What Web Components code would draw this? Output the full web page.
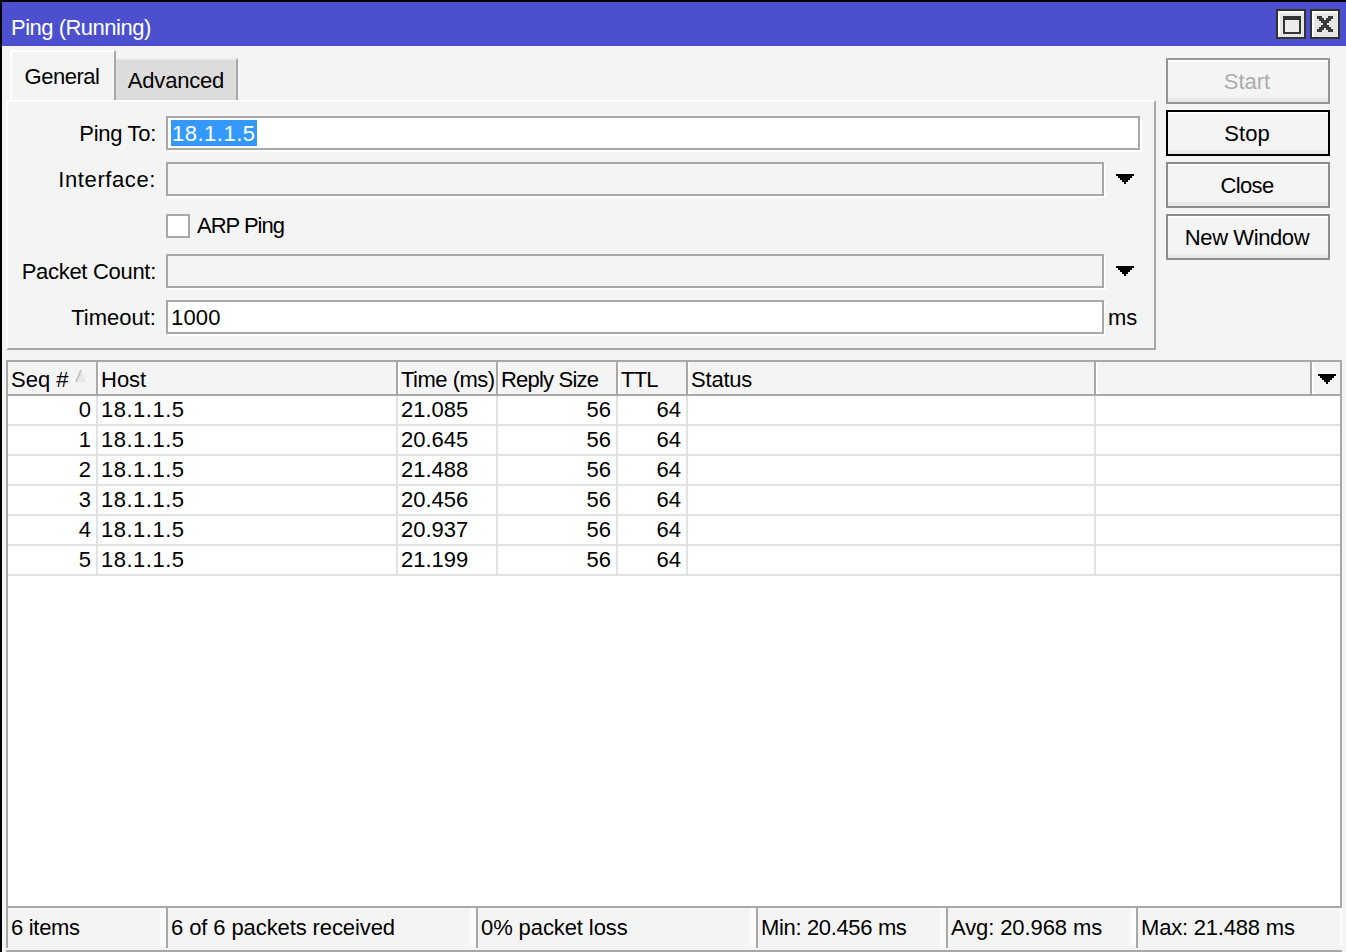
<!DOCTYPE html>
<html><head><meta charset="utf-8"><style>
html,body{margin:0;padding:0;background:#f4f4f4;overflow:hidden}
body{font:22px/30px "Liberation Sans",Arial,sans-serif;color:#000}
</style></head><body>
<win-frame>
  <win-title slot="title">Ping (Running)</win-title>
  <div slot="tabs"><win-tabs></win-tabs></div>
  <ping-form slot="form"></ping-form>
  <win-actions slot="actions">
    <win-btn disabled>Start</win-btn>
    <win-btn focus>Stop</win-btn>
    <win-btn style="letter-spacing:-.6px">Close</win-btn>
    <win-btn style="letter-spacing:-.4px">New Window</win-btn>
  </win-actions>
  <ping-table slot="table"></ping-table>
  <win-status slot="status"></win-status>
</win-frame>
<script>
function def(name,css,html,init){
  customElements.define(name,class extends HTMLElement{
    constructor(){super();const r=this.attachShadow({mode:'open'});r.innerHTML='<style>'+css+'</style>'+html;if(init)init.call(this,r);}
  });
}
const TRI='<svg width="18" height="10" viewBox="0 0 18 10" shape-rendering="crispEdges"><path d="M0 0H18V2H16V4H14V6H12V8H10V10H8V8H6V6H4V4H2V2H0Z" fill="#000"/></svg>';

def('win-frame',`
:host{display:flex;flex-direction:column;box-sizing:border-box;height:952px;border-left:2px solid #000;border-top:2px solid #000;background:#f4f4f4}
.main{display:flex;height:314px;flex:none}
.left{margin-left:4px;width:1150px;flex:none;display:flex;flex-direction:column}
.right{margin-left:10px;padding-top:12px}
.tbl{margin:0 4px;flex:1;display:flex;min-height:0}
.st{margin:0 4px 0 0;flex:none}
`,`<slot name="title"></slot>
<div class="main"><div class="left"><slot name="tabs"></slot><slot name="form"></slot></div><div class="right"><slot name="actions"></slot></div></div>
<div class="tbl"><slot name="table"></slot></div>
<div class="st"><slot name="status"></slot></div>`);

def('win-title',`
:host{display:flex;align-items:center;height:44px;flex:none;background:#4c50cf;color:#fff;padding:0 6px 0 9px;box-sizing:border-box;position:relative}
.t{flex:1;padding-top:8px;align-self:center;letter-spacing:-.5px}
.b{display:block;width:30px;height:30px;box-sizing:border-box;border:2px solid #333;background:#e6e6e6;box-shadow:inset 2px 2px 0 #fff;margin-left:4px}
svg{display:block;margin:2px}
`,`<span class="t"><slot></slot></span>
<span class="b"><svg width="22" height="22" viewBox="0 0 22 22" shape-rendering="crispEdges"><rect x="3" y="3" width="18" height="18" fill="#333"/><rect x="5" y="7" width="14" height="12" fill="#ececec"/></svg></span>
<span class="b"><svg width="22" height="22" viewBox="0 0 22 22" shape-rendering="crispEdges"><path d="M3 3H8V5H10V7H12V5H14V3H19V6H17V8H15V10H13V12H15V14H17V16H19V19H14V17H12V15H10V17H8V19H3V16H5V14H7V12H9V10H7V8H5V6H3Z" fill="#3a3a3a"/></svg></span>`);

def('win-tabs',`
:host{display:flex;align-items:flex-end;height:54px;padding-left:4px;box-sizing:border-box}
.t{box-sizing:border-box;text-align:center}
.a{width:106px;height:50px;background:#f4f4f4;border-top:2px solid #fff;border-left:2px solid #fff;border-right:2px solid #a8a8a8;line-height:50px;padding-right:2px;letter-spacing:-.5px}
.b{width:122px;height:42px;background:#dcdcdc;border-right:2px solid #a8a8a8;line-height:42px;border-top:2px solid #ececec;letter-spacing:-.2px}
`,`<div class="t a">General</div><div class="t b">Advanced</div>`);

def('form-row',`
:host{display:flex;align-items:center;height:34px;flex:none}
.l{width:148px;text-align:right;flex:none;margin-right:10px;padding-top:2px;box-sizing:border-box}
`,`<div class="l"><slot name="label"></slot></div><slot></slot>`);

def('win-input',`
:host{display:block;box-sizing:border-box;height:34px;flex:1;border:2px solid #a8a8a8;background:#fff;box-shadow:2px 2px 0 #fff;padding:0 3px;line-height:32px;white-space:nowrap;overflow:hidden}
:host([empty]){background:#f4f4f4}
`,`<slot></slot>`);

def('ping-form',`
:host{display:flex;flex-direction:column;gap:12px;box-sizing:border-box;height:250px;padding:14px 0 14px 0;border-top:2px solid #fff;border-left:2px solid #fff;border-right:2px solid #a8a8a8;border-bottom:2px solid #a8a8a8}
.sel{background:#3399ff;color:#fff;display:block;width:86px;box-sizing:border-box;height:26px;line-height:28px;margin:2px 0 0;padding:0 0 0 1px;letter-spacing:.5px}
.end1{width:14px;flex:none}
.arrow{flex:none;width:50px;display:flex;justify-content:center}
.arrow svg{display:block;margin:0 0 0 -8px}
.ck{display:block;width:24px;height:24px;box-sizing:border-box;border:2px solid #a8a8a8;background:#fff;flex:none;margin:2px 7px 0 0}
.lb{padding-top:2px;letter-spacing:-1px}
.ms{flex:none;width:50px;padding-left:4px;box-sizing:border-box;padding-top:2px}
.sp{letter-spacing:.6px}
.nr{letter-spacing:-.3px}
.num{letter-spacing:.2px}
`,`
<form-row><span slot="label" class="nr">Ping To:</span><win-input><span class="sel">18.1.1.5</span></win-input><span class="end1"></span></form-row>
<form-row><span slot="label" class="sp">Interface:</span><win-input empty></win-input><span class="arrow">${TRI}</span></form-row>
<form-row><span slot="label"></span><span class="ck"></span><span class="lb">ARP Ping</span></form-row>
<form-row><span slot="label" class="nr">Packet Count:</span><win-input empty></win-input><span class="arrow">${TRI}</span></form-row>
<form-row><span slot="label">Timeout:</span><win-input><span class="num">1000</span></win-input><span class="ms">ms</span></form-row>`);

def('win-actions',`:host{display:flex;flex-direction:column;gap:6px;width:164px}`,`<slot></slot>`);

def('win-btn',`
:host{display:block;box-sizing:border-box;height:46px;border:2px solid #8c8c8c;background:#f4f4f4;box-shadow:inset 0 2px 0 #fff,inset 0 -4px 0 #e9e9e9;text-align:center;line-height:43px;padding-right:2px}
:host([disabled]){color:#adadad;border-color:#959595}
:host([focus]){border-color:#000}
`,`<slot></slot>`);

const COLS='90px 300px 100px 120px 70px 408px 216px 28px';
def('ping-table',`
:host{display:flex;flex-direction:column;flex:1;box-sizing:border-box;background:#fff;border:2px solid #a8a8a8;min-width:0}
.h,.r{display:grid;grid-template-columns:${COLS};flex:none}
.h{height:32px;background:#f4f4f4;border-bottom:2px solid #a8a8a8}
.h>div{box-sizing:border-box;border-right:2px solid #a8a8a8;padding-left:3px;line-height:36px;box-shadow:inset 2px 0 0 #fff;white-space:nowrap;overflow:hidden;position:relative}
.h>div:first-child{box-shadow:none}
.h>div:last-child{border-right:0;display:flex;justify-content:center;align-items:center}
.h>div:last-child svg{margin:2px 2px 0 0}
.h svg{display:block}
.h .s{position:absolute;left:65px;top:7px}
.r{height:30px;border-bottom:2px solid #e2e2e2;box-sizing:border-box;grid-template-columns:90px 300px 100px 120px 70px 408px 244px}
.r>div{box-sizing:border-box;border-right:2px solid #e2e2e2;padding:0 3px;line-height:28px;white-space:nowrap}
.r>div:last-child{border-right:0}
.n{text-align:right;padding-right:5px!important}
.ip{letter-spacing:.5px}
`,`<div class="h"><div>Seq #<svg class="s" width="14" height="14" viewBox="0 0 14 14"><path d="M8 1L13 13H3Z" fill="#e8e8e8"/><path d="M8 1L3 13" stroke="#bbb" stroke-width="1.5" fill="none"/></svg></div><div>Host</div><div style="letter-spacing:-.5px">Time (ms)</div><div style="letter-spacing:-.8px">Reply Size</div><div style="letter-spacing:-.8px">TTL</div><div style="letter-spacing:-.2px">Status</div><div></div><div>${TRI}</div></div><div id="b"></div>`,
function(r){
  const t=['21.085','20.645','21.488','20.456','20.937','21.199'];
  r.getElementById('b').innerHTML=t.map((v,i)=>`<div class="r"><div class="n">${i}</div><div class="ip">18.1.1.5</div><div>${v}</div><div class="n">56</div><div class="n">64</div><div></div><div></div></div>`).join('');
});

def('win-status',`
:host{display:grid;grid-template-columns:160px 310px 280px 190px 190px 1fr;margin-left:4px;box-sizing:border-box;height:44px;border-bottom:2px solid #a8a8a8}
.c{box-sizing:border-box;height:40px;padding:5px 0 0 3px;line-height:30px;background:#f4f4f4;border-left:2px solid #a8a8a8;position:relative;white-space:nowrap;letter-spacing:-.1px}
.c::after{content:"";position:absolute;right:0;top:0;bottom:2px;width:6px;background:#fbfbfb}
.c:last-child::after{width:2px}
`,`<div class="c" style="letter-spacing:-.3px">6 items</div><div class="c">6 of 6 packets received</div><div class="c">0% packet loss</div><div class="c" style="letter-spacing:-.35px">Min: 20.456 ms</div><div class="c">Avg: 20.968 ms</div><div class="c" style="letter-spacing:-.2px">Max: 21.488 ms</div>`);
</script>
</body></html>
